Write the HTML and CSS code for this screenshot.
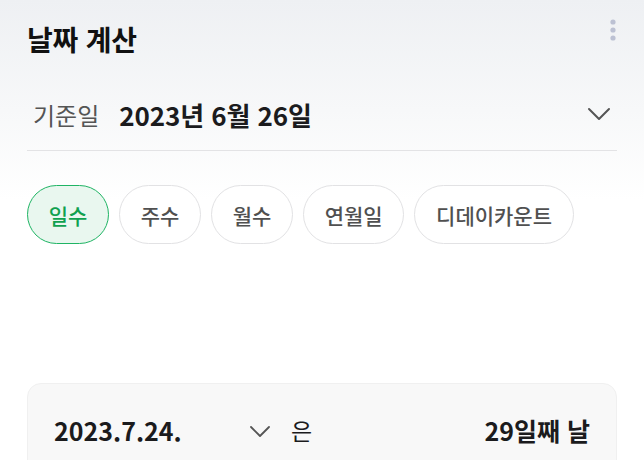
FILE: index.html
```html
<!DOCTYPE html>
<html lang="ko">
<head>
<meta charset="utf-8">
<link rel="stylesheet" href="styles.css">
</head>
<body>
<div class="app">
  <header class="topbar">
    <h1 class="title">날짜 계산</h1>
    <svg class="kebab" width="8" height="26" viewBox="0 0 8 26">
      <circle cx="4" cy="5" r="2.6" fill="#bcc1d3"/>
      <circle cx="4" cy="13" r="2.6" fill="#bcc1d3"/>
      <circle cx="4" cy="21" r="2.6" fill="#bcc1d3"/>
    </svg>
  </header>
  <div class="base-row">
    <span class="base-label">기준일</span>
    <span class="base-date">2023년 6월 26일</span>
    <svg class="chev" width="24" height="14" viewBox="0 0 24 14"><path d="M2 2 L12 12 L22 2" fill="none" stroke="#555" stroke-width="2" stroke-linecap="round" stroke-linejoin="round"/></svg>
  </div>
  <nav class="chips">
    <span class="chip active">일수</span>
    <span class="chip">주수</span>
    <span class="chip">월수</span>
    <span class="chip">연월일</span>
    <span class="chip">디데이카운트</span>
  </nav>
  <section class="card">
    <div class="card-row">
      <span class="target-date">2023.7.24.</span>
      <svg class="chev small" width="22" height="13" viewBox="0 0 22 13"><path d="M2 2 L11 11 L20 2" fill="none" stroke="#555" stroke-width="1.8" stroke-linecap="round" stroke-linejoin="round"/></svg>
      <span class="eun">은</span>
      <span class="result">29일째 날</span>
    </div>
  </section>
</div>
</body>
</html>
```
FILE: styles.css
```css
* { box-sizing: border-box; }
html, body { margin: 0; padding: 0; }
body {
  width: 644px;
  height: 460px;
  overflow: hidden;
  background: linear-gradient(to bottom, #eef0f3 0px, #f7f8f9 110px, #ffffff 200px);
  font-family: "Noto Sans CJK KR", "Noto Sans", sans-serif;
  color: #1b1b1d;
}
.app { padding: 0 27px; }
.topbar {
  height: 78px;
  display: flex;
  align-items: center;
  justify-content: space-between;
}
.title {
  margin: 0;
  font-size: 28px;
  font-weight: 700;
  letter-spacing: -0.2px;
  color: #111;
}
.kebab { align-self: flex-start; margin-top: 17px; }
.base-row {
  height: 73px;
  display: flex;
  align-items: center;
  border-bottom: 1.5px solid #e3e3e5;
  padding-left: 6px;
}
.base-label {
  font-size: 24px;
  color: #555;
  margin-right: 20px;
}
.base-date {
  font-size: 26px;
  font-weight: 700;
  color: #1b1b1d;
  letter-spacing: -0.1px;
}
.chev { margin-left: auto; margin-right: 6px; }
.chips {
  display: flex;
  gap: 10px;
  margin-top: 34px;
}
.chip {
  height: 59px;
  display: flex;
  align-items: center;
  padding: 0 20.7px;
  border: 1.5px solid #e2e2e4;
  border-radius: 30px;
  font-size: 21px;
  font-weight: 500;
  color: #505050;
  background: #fff;
}
.chip.active {
  background: #e9f7ef;
  border-color: #1fb464;
  color: #10a14f;
}
.card {
  margin-top: 139px;
  background: #f8f8f8;
  border: 1px solid #f0f0f0;
  border-radius: 14px;
  height: 100px;
  padding: 0 26px;
}
.card-row {
  height: 92px;
  display: flex;
  align-items: center;
}
.target-date {
  font-size: 25px;
  font-weight: 700;
  width: 195px;
}
.chev.small { margin: 2px 20px 0 0; }
.eun { font-size: 23px; }
.result {
  margin-left: auto;
  font-size: 25px;
  font-weight: 700;
}
```
